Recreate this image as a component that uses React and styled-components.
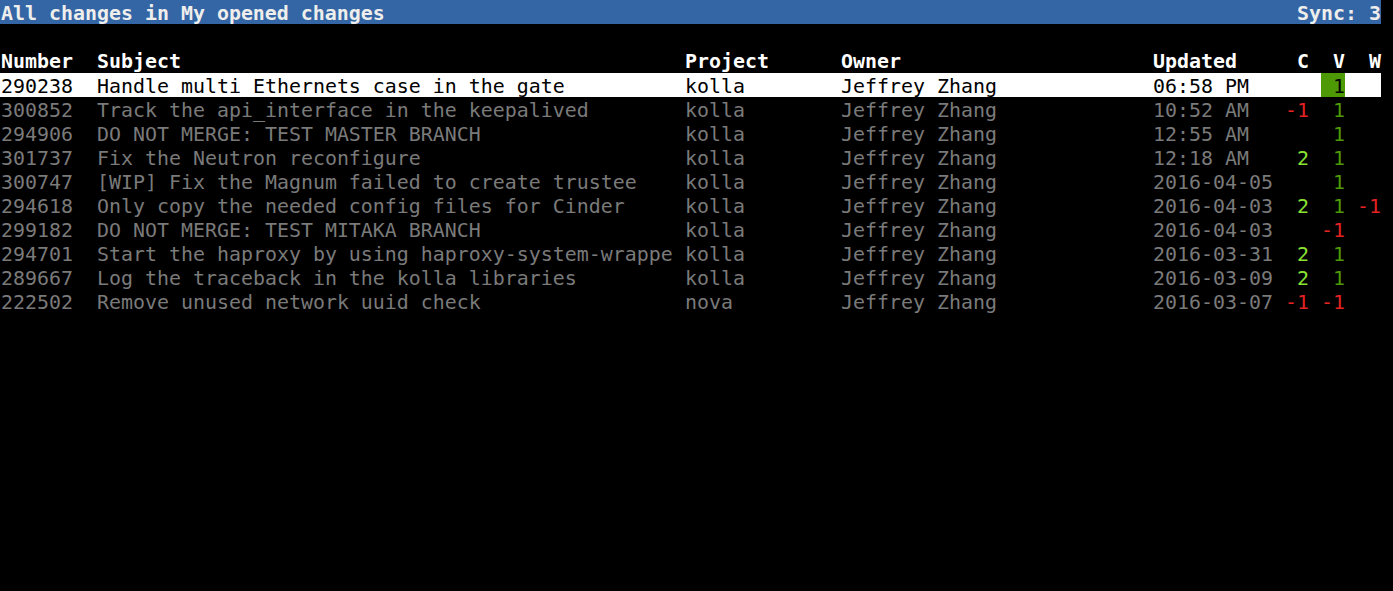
import React from 'react';
import styled, { createGlobalStyle } from 'styled-components';

const CH = 12;

const GlobalStyle = createGlobalStyle`
    html, body {
        margin: 0;
        padding: 0;
        background: #000;
    }
    body {
        font-family: "DejaVu Sans Mono", "Liberation Mono", monospace;
        font-size: 19.93px;
        line-height: 24px;
        color: #7a7a7a;
    }
`;

const changes = [
    { num: '290238', subject: 'Handle multi Ethernets case in the gate', project: 'kolla', owner: 'Jeffrey Zhang', updated: '06:58 PM', c: '', v: '1', w: '' },
    { num: '300852', subject: 'Track the api_interface in the keepalived', project: 'kolla', owner: 'Jeffrey Zhang', updated: '10:52 AM', c: '-1', v: '1', w: '' },
    { num: '294906', subject: 'DO NOT MERGE: TEST MASTER BRANCH', project: 'kolla', owner: 'Jeffrey Zhang', updated: '12:55 AM', c: '', v: '1', w: '' },
    { num: '301737', subject: 'Fix the Neutron reconfigure', project: 'kolla', owner: 'Jeffrey Zhang', updated: '12:18 AM', c: '2', v: '1', w: '' },
    { num: '300747', subject: '[WIP] Fix the Magnum failed to create trustee', project: 'kolla', owner: 'Jeffrey Zhang', updated: '2016-04-05', c: '', v: '1', w: '' },
    { num: '294618', subject: 'Only copy the needed config files for Cinder', project: 'kolla', owner: 'Jeffrey Zhang', updated: '2016-04-03', c: '2', v: '1', w: '-1' },
    { num: '299182', subject: 'DO NOT MERGE: TEST MITAKA BRANCH', project: 'kolla', owner: 'Jeffrey Zhang', updated: '2016-04-03', c: '', v: '-1', w: '' },
    { num: '294701', subject: 'Start the haproxy by using haproxy-system-wrappe', project: 'kolla', owner: 'Jeffrey Zhang', updated: '2016-03-31', c: '2', v: '1', w: '' },
    { num: '289667', subject: 'Log the traceback in the kolla libraries', project: 'kolla', owner: 'Jeffrey Zhang', updated: '2016-03-09', c: '2', v: '1', w: '' },
    { num: '222502', subject: 'Remove unused network uuid check', project: 'nova', owner: 'Jeffrey Zhang', updated: '2016-03-07', c: '-1', v: '-1', w: '' },
];

function voteColor(val) {
    if (val === '2') return '#8ae234';
    if (val === '1') return '#4e9a06';
    if (val.startsWith('-')) return '#e52222';
    return 'inherit';
}

export default function App() {
    return (
        <Screen>
            <GlobalStyle />
            <TitleBar>
                <span>All changes in My opened changes</span>
                <span>Sync: 3</span>
            </TitleBar>
            <Spacer />
            <HeaderRow>
                <Cell $cols={8}>Number</Cell>
                <Cell $cols={49}>Subject</Cell>
                <Cell $cols={13}>Project</Cell>
                <Cell $cols={26}>Owner</Cell>
                <Cell $cols={11}>Updated</Cell>
                <Vote>C</Vote>
                <Gap />
                <Vote>V</Vote>
                <Gap />
                <Vote>W</Vote>
            </HeaderRow>
            {changes.map((ch, i) => (
                <Row key={ch.num} $selected={i === 0}>
                    <Cell $cols={8}>{ch.num}</Cell>
                    <Cell $cols={49}>{ch.subject}</Cell>
                    <Cell $cols={13}>{ch.project}</Cell>
                    <Cell $cols={26}>{ch.owner}</Cell>
                    <Cell $cols={11}>{ch.updated}</Cell>
                    <Vote $color={voteColor(ch.c)}>{ch.c}</Vote>
                    <Gap />
                    <Vote
                        $color={i === 0 ? '#000' : voteColor(ch.v)}
                        $bg={i === 0 ? '#4e9a06' : 'transparent'}
                    >
                        {ch.v}
                    </Vote>
                    <Gap />
                    <Vote $color={voteColor(ch.w)}>{ch.w}</Vote>
                </Row>
            ))}
        </Screen>
    );
}

const Screen = styled.div`
    width: 1393px;
    height: 591px;
    background: #000;
    overflow: hidden;
`;

// terminal line: 24px tall, glyphs sit 2px lower than a plain line box
const Line = styled.div`
    width: ${115 * CH + 1}px;
    height: 24px;
    display: flex;
    white-space: pre;
    & > * {
        padding-top: 2px;
        height: 22px;
    }
`;

const TitleBar = styled(Line)`
    background: #3465a4;
    color: #eeeeec;
    font-weight: bold;
    justify-content: space-between;
    padding-left: 1px;
    box-sizing: border-box;
`;

const Spacer = styled.div`
    height: 24px;
`;

const Row = styled(Line)`
    padding-left: 1px;
    box-sizing: border-box;
    background: ${p => (p.$selected ? '#fff' : 'transparent')};
    color: ${p => (p.$selected ? '#000' : '#7a7a7a')};
`;

const HeaderRow = styled(Row)`
    color: #fff;
    font-weight: bold;
    margin-bottom: 1px;
`;

const Cell = styled.div`
    width: ${p => p.$cols * CH}px;
    flex: none;
`;

const Vote = styled.div`
    width: ${2 * CH}px;
    flex: none;
    text-align: right;
    color: ${p => p.$color || 'inherit'};
    background: ${p => p.$bg || 'transparent'};
`;

const Gap = styled.div`
    width: ${CH}px;
    flex: none;
`;
